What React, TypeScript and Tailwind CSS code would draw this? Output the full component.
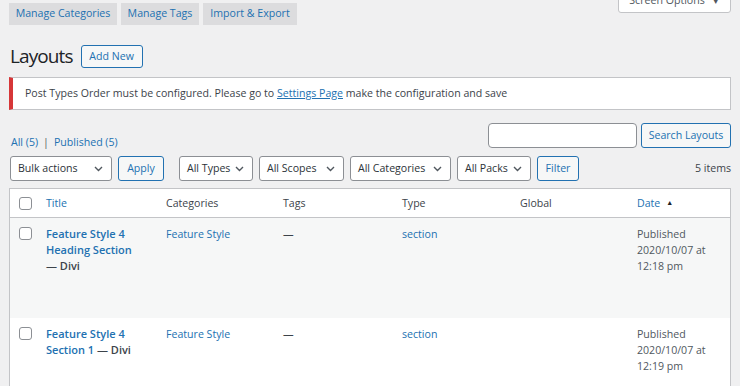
import React from 'react';

const Chevron = () => (
  <svg width="9" height="6" viewBox="0 0 9 6" className="ml-auto shrink-0">
    <path d="M1 1l3.5 3.5L8 1" fill="none" stroke="#50575e" strokeWidth="1.4" />
  </svg>
);

const Select = ({ label, w }: { label: string; w: string }) => (
  <div className={`flex items-center h-[25px] ${w} pl-[7px] pr-[8px] bg-white border border-[#8c8f94] rounded-[3px] text-[#2c3338] text-[10.6px]`}>
    <span>{label}</span>
    <Chevron />
  </div>
);

const Checkbox = () => (
  <div className="w-[13px] h-[13px] bg-white border border-[#8c8f94] rounded-[3px]" />
);

const rows = [
  { title: ['Feature Style 4', 'Heading Section'], tail: '— Divi', time: '12:18 pm', bg: 'bg-[#f6f7f7]' },
  { title: ['Feature Style 4'], tail: 'Section 1 — Divi', time: '12:19 pm', bg: 'bg-white' },
];

const cols = 'grid grid-cols-[27px_120px_117px_119px_118px_117px_1fr]';

export default function App() {
  return (
    <div
      className="w-[740px] h-[386px] overflow-hidden bg-[#f0f0f1] px-[9px] text-[#3c434a]"
      style={{ fontFamily: '"Open Sans", "Noto Sans", sans-serif' }}
    >
      {/* top bar */}
      <div className="flex justify-between items-start">
        <div className="flex gap-[4px] pt-[3px] text-[10.6px] text-[#2271b1]">
          <div className="h-[22px] w-[108px] flex items-center justify-center bg-[#dcdcde]">Manage Categories</div>
          <div className="h-[22px] w-[78px] flex items-center justify-center bg-[#dcdcde]">Manage Tags</div>
          <div className="h-[22px] w-[94px] flex items-center justify-center bg-[#dcdcde]">Import &amp; Export</div>
        </div>
        <div className="-mt-[11px] h-[24px] w-[113px] flex items-center justify-center gap-[7px] bg-white border border-[#c3c4c7] rounded-b-[3px] text-[10.6px] text-[#50575e]">
          <span>Screen Options</span>
          <span className="text-[8px]">▼</span>
        </div>
      </div>

      {/* heading */}
      <div className="flex items-center mt-[20px] h-[23px]">
        <h1 className="text-[19px] tracking-[-0.9px] leading-none text-[#1d2327] ml-px">Layouts</h1>
        <div className="ml-[8px] h-[23px] w-[62px] flex items-center justify-center border border-[#2271b1] rounded-[3px] bg-[#f6f7f7] text-[#2271b1] text-[10.6px]">
          Add New
        </div>
      </div>

      {/* notice */}
      <div className="mt-[9px] h-[33px] flex items-center bg-white border border-[#c3c4c7] border-l-[4px] border-l-[#d63638] pl-[12px] text-[10.6px] text-[#3c434a]">
        Post Types Order must be configured. Please go to&nbsp;
        <span className="text-[#2271b1] underline">Settings Page</span>
        &nbsp;make the configuration and save
      </div>

      {/* views + search */}
      <div className="flex justify-between mt-[13px] h-[25px]">
        <div className="self-end text-[10.6px] leading-[15px] text-[#2271b1] ml-[2px] -mb-[2px]">
          All (5)
          <span className="text-[#50575e] mx-[5px]">|</span>
          Published (5)
        </div>
        <div className="flex gap-[4px]">
          <div className="w-[149px] h-[25px] bg-white border border-[#8c8f94] rounded-[4px]" />
          <div className="w-[90px] h-[25px] flex items-center justify-center bg-[#f6f7f7] border border-[#2271b1] rounded-[3px] text-[#2271b1] text-[10.6px]">
            Search Layouts
          </div>
        </div>
      </div>

      {/* filters */}
      <div className="flex items-center mt-[8px] h-[25px] pl-px">
        <Select label="Bulk actions" w="w-[102px]" />
        <div className="ml-[6px] w-[46px] h-[25px] flex items-center justify-center bg-[#f6f7f7] border border-[#2271b1] rounded-[3px] text-[#2271b1] text-[10.6px]">
          Apply
        </div>
        <div className="ml-[15px] flex gap-[6px]">
          <Select label="All Types" w="w-[74px]" />
          <Select label="All Scopes" w="w-[85px]" />
          <Select label="All Categories" w="w-[101px]" />
          <Select label="All Packs" w="w-[74px]" />
        </div>
        <div className="ml-[6px] w-[42px] h-[25px] flex items-center justify-center bg-[#f6f7f7] border border-[#2271b1] rounded-[3px] text-[#2271b1] text-[10.6px]">
          Filter
        </div>
        <div className="ml-auto text-[10.6px] text-[#3c434a]">5 items</div>
      </div>

      {/* table */}
      <div className="mt-[7px] border border-[#c3c4c7] bg-white">
        <div className={`${cols} h-[29px] items-center border-b border-[#c3c4c7] text-[10.6px] pt-px`}>
          <div className="pl-[9px]"><Checkbox /></div>
          <div className="pl-[9px] text-[#2271b1]">Title</div>
          <div className="pl-[9px]">Categories</div>
          <div className="pl-[9px]">Tags</div>
          <div className="pl-[9px]">Type</div>
          <div className="pl-[9px]">Global</div>
          <div className="pl-[9px] text-[#2271b1] flex items-center gap-[6px]">
            Date <span className="text-[#1d2327] text-[7px]">▲</span>
          </div>
        </div>
        {rows.map((r, i) => (
          <div key={i} className={`${cols} h-[100px] pt-[8px] ${r.bg} text-[10.6px] leading-[16px]`}>
            <div className="pl-[9px] pt-px"><Checkbox /></div>
            <div className="pl-[9px] font-semibold text-[11px]">
              {r.title.map((t) => (
                <div key={t} className="text-[#2271b1]">{t}</div>
              ))}
              <div className="text-[#3c434a]">
                {r.tail.startsWith('—') ? r.tail : (
                  <>
                    <span className="text-[#2271b1]">Section 1</span> — Divi
                  </>
                )}
              </div>
            </div>
            <div className="pl-[9px] text-[#2271b1]">Feature Style</div>
            <div className="pl-[9px]">—</div>
            <div className="pl-[9px] text-[#2271b1]">section</div>
            <div className="pl-[9px]" />
            <div className="pl-[9px] text-[#50575e]">
              <div>Published</div>
              <div>2020/10/07 at</div>
              <div>{r.time}</div>
            </div>
          </div>
        ))}
      </div>
    </div>
  );
}
